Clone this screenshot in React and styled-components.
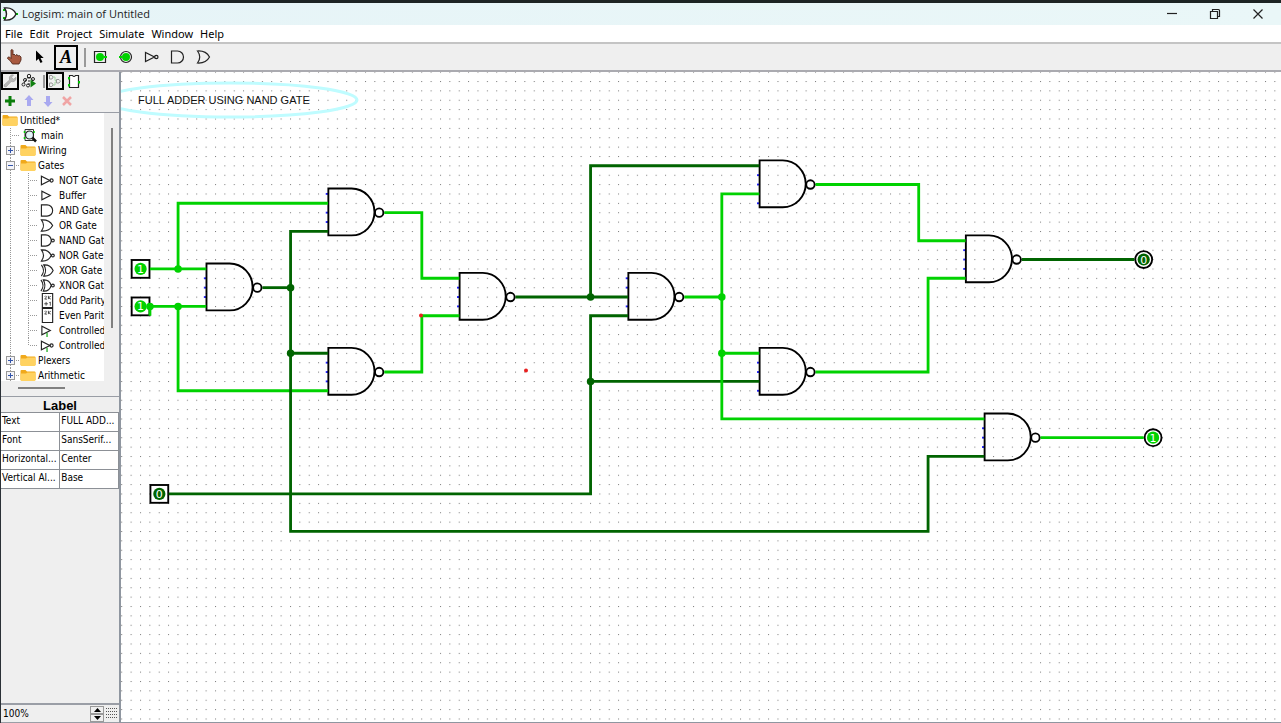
import React from "react";
import styled, { createGlobalStyle } from "styled-components";

const GlobalStyle = createGlobalStyle`
  *, *::before, *::after { box-sizing: border-box; }
  body { margin: 0; background: #efefef; }
  button, input { font: inherit; color: inherit; margin: 0; padding: 0; border: 0; border-radius: 0; background: none; }
  svg { display: block; flex: none; }
`;

const uiFont = `"DejaVu Sans Condensed", "DejaVu Sans", sans-serif`;

const Window = styled.div`
  display: flex;
  flex-direction: column;
  height: 100vh;
  border-top: 3px solid #1d2424;
  border-left: 1px solid #2a3036;
  background: #efefef;
  color: #000;
  font: 10px/15px ${uiFont};
  overflow: hidden;
`;

const TitleBar = styled.header`
  display: flex;
  align-items: center;
  flex: none;
  height: 22px;
  padding: 0 2px 0 1px;
  gap: 4px;
  background: linear-gradient(90deg, #e6f4f7, #eaf7f8);
`;

const Title = styled.h1`
  flex: 1;
  margin: 0;
  font: 400 11px/20px "Open Sans", sans-serif;
  color: #222;
`;

const WindowControls = styled.div`
  display: flex;
`;

const WindowButton = styled.button`
  display: flex;
  align-items: center;
  justify-content: center;
  width: 43px;
  height: 20px;
`;

const MenuBar = styled.nav`
  display: flex;
  flex: none;
  gap: 7px;
  height: 19px;
  padding: 0 4px;
  background: #fff;
  border-bottom: 2px solid #c4c4c4;
  font: 11px/17px "Noto Sans", sans-serif;
`;

const MenuItem = styled.button`
  line-height: 17px;
`;

const Toolbar = styled.div`
  display: flex;
  align-items: center;
  flex: none;
  gap: 2px;
  height: 28px;
  padding: 0 1px;
  border-bottom: 2px solid #aaaab0;
`;

const ToolButton = styled.button`
  display: flex;
  align-items: center;
  justify-content: center;
  width: ${(p) => (p.$small ? 18 : 24)}px;
  height: ${(p) => (p.$small ? 18 : 25)}px;
  border: ${(p) => (p.$on ? "2px solid #000" : "0")};
`;

const Separator = styled.span`
  width: 2px;
  height: ${(p) => (p.$small ? 13 : 19)}px;
  margin: ${(p) => (p.$small ? "0 0 0 4px" : "0 0 0 4px")};
  background: #999;
`;

const Body = styled.div`
  display: flex;
  flex: 1;
  min-height: 0;
`;

const Sidebar = styled.aside`
  display: flex;
  flex-direction: column;
  flex: none;
  width: 120px;
  border-right: 2px solid #8f96a0;
`;

const SideTools = styled.div`
  display: flex;
  align-items: center;
  flex: none;
  gap: 1px;
  height: ${(p) => (p.$tall ? 22 : 18)}px;
`;

const Explorer = styled.div`
  display: grid;
  grid-template: 268px 15px / 103px 1fr;
  flex: none;
  border-top: 1px solid #999da5;
  border-bottom: 1px solid #999da5;
`;

const Tree = styled.ul`
  margin: 0;
  padding: 0;
  list-style: none;
  background: #fff;
  overflow: hidden;
`;

const TreeRow = styled.li`
  display: flex;
  align-items: center;
  height: 15px;
  white-space: nowrap;
  padding-left: 1px;
`;

const Guide = styled.span`
  display: flex;
  align-items: center;
  flex: none;
  width: 18px;
  height: 15px;
  padding-left: 4px;
  background-image: repeating-linear-gradient(to bottom, #999 0 1px, #fff 1px 2px),
    repeating-linear-gradient(to right, #999 0 1px, #fff 1px 2px);
  background-size: 1px ${(p) => (p.$last ? "8px" : "100%")}, ${(p) => (p.$branch ? 11 : 0)}px 1px;
  background-position: 8px 0, 8px 7px;
  background-repeat: no-repeat;
`;

const Expander = styled.button`
  display: flex;
  align-items: center;
  justify-content: center;
  width: 9px;
  height: 9px;
  border: 1px solid #999;
  background: #f4f4f8;
`;

const TreeIcon = styled.span`
  display: flex;
  flex: none;
  width: ${(p) => (p.$leaf ? 21 : 18)}px;
  padding-left: ${(p) => (p.$leaf ? 2 : 0)}px;
`;

const VerticalTrack = styled.div`
  padding: 15px 0 0 7px;
`;

const HorizontalTrack = styled.div`
  padding: 6px 0 0 17px;
`;

const Thumb = styled.div`
  width: ${(p) => (p.$vertical ? 2 : 47)}px;
  height: ${(p) => (p.$vertical ? 200 : 2)}px;
  background: #808080;
`;

const Attributes = styled.table`
  flex: none;
  width: 100%;
  table-layout: fixed;
  border-collapse: collapse;
  background: #fff;

  caption {
    height: 15px;
    font: 700 13px/17px "Liberation Sans", sans-serif;
    background: #efefef;
  }
  th, td {
    height: 19px;
    padding: 0 0 0 1px;
    border: 1px solid #8c9096;
    border-left-width: 0;
    font-weight: 400;
    line-height: 15px;
    vertical-align: top;
    text-align: left;
    white-space: nowrap;
  }
`;

const ZoomBar = styled.div`
  display: flex;
  align-items: center;
  flex: none;
  height: 20px;
  margin-top: auto;
  border-top: 2px solid #9a9ea6;
  border-bottom: 1px solid #9a9ea6;
`;

const ZoomInput = styled.input`
  flex: 1;
  min-width: 0;
  height: 17px;
  padding-left: 2px;
`;

const Stepper = styled.div`
  display: flex;
  flex-direction: column;
  width: 14px;
`;

const StepButton = styled.button`
  display: flex;
  align-items: center;
  justify-content: center;
  height: 8px;
  border: 1px solid #999;
`;

const GridToggle = styled.button`
  display: flex;
  align-items: center;
  justify-content: center;
  width: 15px;
  height: 17px;
`;

const Canvas = styled.main`
  flex: 1;
  min-width: 0;
  background: #fff;
  border-bottom: 1px solid #8f96a0;
  overflow: hidden;

  svg { width: 100%; height: 100%; }
`;

/* ---------- icons ---------- */

const gateShapes = {
  not: <><path d="M1.500 3.500V12.500L10.500 8z" /><circle cx="12.300" cy="8" r="1.700" /></>,
  buffer: <path d="M2 3.500V12.500L11 8z" />,
  and: <path d="M1.500 2H7.500a6 6 0 0 1 0 12H1.500z" />,
  or: <path d="M1.500 2Q10 1.500 13.500 8Q10 14.500 1.500 14Q6 8 1.500 2z" />,
  nand: <><path d="M1.500 2H6a6 6 0 0 1 0 12H1.500z" /><circle cx="13.700" cy="8" r="1.500" /></>,
  nor: <><path d="M1.500 2Q9 1.500 12 8Q9 14.500 1.500 14Q6 8 1.500 2z" /><circle cx="13.700" cy="8" r="1.500" /></>,
  xor: <><path d="M4 2Q11 1.500 14 8Q11 14.500 4 14Q8 8 4 2z" /><path d="M1.500 2Q6 8 1.500 14" /></>,
  xnor: <><path d="M3.500 2Q10 1.500 12 8Q10 14.500 3.500 14Q7 8 3.500 2z" /><path d="M1 2Q5.500 8 1 14" /><circle cx="13.700" cy="8" r="1.500" /></>,
  controlled: <><path d="M2 3.500V12.500L11 8z" /><path d="M7.500 10.500V15" stroke="#00a000" /></>,
  controlledNot: <><path d="M1.500 3.500V12.500L10.500 8z" /><circle cx="12.300" cy="8" r="1.700" /><path d="M7.500 10.500V15" stroke="#00a000" /></>,
  odd: <><path d="M2.500 .5H13.500V15.500H2.500z" /><path d="M5 4Q6 2 7 4L5 6.500H7.500M9 3V6.500M11.500 3.500L9 5L11.500 6.500M4.500 11.500H8.500M6.500 9.500V13.500M10 10.500L11 9.500V13.500" strokeWidth=".8" /></>,
  even: <><path d="M2.500 .5H13.500V15.500H2.500z" /><path d="M5 4Q6 2 7 4L5 6.500H7.500M9 3V6.500M11.500 3.500L9 5L11.500 6.500" strokeWidth=".8" /></>,
};

const GateIcon = ({ kind, size = 16 }) => (
  <svg width={size} height={size} viewBox="0 0 16 16" fill="none" stroke="#222" strokeWidth="1.200">
    {gateShapes[kind]}
  </svg>
);

const FolderIcon = () => (
  <svg width="16" height="13" viewBox="0 0 16 13">
    <path d="M.5 2Q.5 1 1.500 1H5.500L7 2.500H14.500Q15.500 2.500 15.500 3.500V11H.5z" fill="#f0a91b" />
    <path d="M.5 4.500H6L7.500 3.500H15.500V11Q15.500 12 14.500 12H1.500Q.5 12 .5 11z" fill="#ffd261" />
  </svg>
);

const MainIcon = () => (
  <svg width="16" height="15" viewBox="0 0 16 15" fill="none">
    <path d="M3 1.500H11.500V12.500H3z" stroke="#333" />
    <path d="M2.500 3V5M2.500 9V11M12 3V5" stroke="#00d000" strokeWidth="1.500" />
    <circle cx="7.500" cy="7" r="4" fill="#e4f4f8" stroke="#222" strokeWidth="1.200" />
    <path d="M10.500 10L14 13.500" stroke="#111" strokeWidth="2.500" />
  </svg>
);

const AppIcon = () => (
  <svg width="16" height="14" viewBox="0 0 16 14" fill="none">
    <path d="M1 3H4M1 11H4M13 7H16" stroke="#00c000" strokeWidth="2" />
    <path d="M2.500 1Q11 0 14 7Q11 14 2.500 13Q6.500 7 2.500 1z" fill="#fff" stroke="#222" strokeWidth="1.400" />
  </svg>
);

const HandIcon = () => (
  <svg width="16" height="16" viewBox="0 0 16 16">
    <path d="M5 1Q6.500 0 7 1.500V6L8 5L9.500 6.500L11 5.500L12 7L13.500 6.500L15 8V11L13 15H6.500L4 11.500L1.500 9.500Q1.500 7.500 3.500 8L5 9.500z" fill="#a9593f" stroke="#572a1d" strokeWidth=".9" />
  </svg>
);

const ArrowIcon = () => (
  <svg width="12" height="16" viewBox="0 0 12 16">
    <path d="M2 1.500L2 12L4.500 9.700L6.500 14L8.500 13L6.500 9L9.700 9z" />
  </svg>
);

const LetterIcon = styled.span`
  font: italic 700 18px/18px "Liberation Serif", serif;
`;

const PinIcon = ({ round }) => (
  <svg width="14" height="14" viewBox="0 0 14 14" fill="none">
    {round ? <circle cx="7" cy="7" r="5.500" stroke="#222" strokeWidth="1.200" /> : <path d="M1.500 1.500H12.500V12.500H1.500z" stroke="#222" strokeWidth="1.200" />}
    <circle cx="7" cy="7" r="4" fill="#00d200" />
    <path d={round ? "M0 7H3" : "M11 7H14"} stroke="#00d200" strokeWidth="2" />
  </svg>
);

const WrenchIcon = () => (
  <svg width="14" height="14" viewBox="0 0 14 14">
    <path d="M1 11L6.500 6Q5.500 2.500 8 1.200Q9.500 .5 10.500 1L8.500 3.300L10.500 5.300L13 3.300Q13.500 6.500 11 7.500Q9.500 8 8.200 7.500L3 13Q.5 13 1 11z" fill="#b8b8b8" stroke="#999" strokeWidth=".6" />
  </svg>
);

const SimulationIcon = () => (
  <svg width="16" height="16" viewBox="0 0 16 16" fill="none" stroke="#222">
    <path d="M7 4L3 10M8 4L8 12M9 4L12 8" strokeDasharray="2 1" />
    <circle cx="8" cy="3" r="1.700" /><circle cx="4" cy="7" r="1.500" />
    <circle cx="2.500" cy="11.500" r="1.500" /><circle cx="7" cy="12.500" r="1.500" /><circle cx="12" cy="6" r="1.500" />
    <path d="M9.500 6.500L15 10.500L9.500 14.500z" fill="#108010" stroke="none" />
  </svg>
);

const LayoutIcon = () => (
  <svg width="14" height="14" viewBox="0 0 14 14" fill="none" stroke="#999">
    <path d="M1.500 1.500H4q2 1.500 0 3.500H1.500zM1.500 9H4q2 1.500 0 3.500H1.500zM8.500 5.500H11q3 1.500 0 3.500H8.500z" />
    <path d="M5 3H7V6.500H8M5 11H7V8H8" stroke="#a5d6a5" />
  </svg>
);

const AppearanceIcon = () => (
  <svg width="12" height="15" viewBox="0 0 12 15" fill="none">
    <path d="M1.500 1.500H4.500q1.500 2 3 0H10.500V13.500H1.500z" fill="#fff" stroke="#222" strokeWidth="1.200" />
    <path d="M1 3V5.500M1 10V12.500M11 7V9.500" stroke="#00c800" strokeWidth="2" />
  </svg>
);

const editShapes = {
  add: <path d="M6 1V11M1 6H11" stroke="#0a7d0a" strokeWidth="3" />,
  up: <path d="M6 0L10.500 5H8V11H4V5H1.500z" fill="#a9a9f0" />,
  down: <path d="M6 12L10.500 7H8V1H4V7H1.500z" fill="#a9a9f0" />,
  remove: <path d="M2 2L10 10M10 2L2 10" stroke="#f0a5a5" strokeWidth="2.500" />,
};

const EditIcon = ({ kind }) => (
  <svg width="12" height="12" viewBox="0 0 12 12" fill="none">{editShapes[kind]}</svg>
);

const windowShapes = {
  Minimize: <path d="M1 5.500H11" />,
  Restore: <path d="M1.500 3.500H8.500V10.500H1.500zM3.500 3V1.500H9.500Q10.500 1.500 10.500 2.500V8.500H9" />,
  Close: <path d="M1.500 1.500L10.500 10.500M10.500 1.500L1.500 10.500" />,
};

/* ---------- circuit ---------- */

const HIGH = "#00d200";
const LOW = "#006400";

// All circuit coordinates are grid steps of ten units.
const wires = [
  [HIGH, [2, 20], [8, 20]],
  [HIGH, [5, 20], [5, 13], [21, 13]],
  [HIGH, [2, 25], [2, 24], [8, 24]],
  [HIGH, [5, 24], [5, 33], [21, 33]],
  [HIGH, [27, 14], [31, 14], [31, 21], [35, 21]],
  [HIGH, [27, 31], [31, 31], [31, 25], [35, 25]],
  [LOW, [14, 22], [17, 22]],
  [LOW, [21, 16], [17, 16], [17, 48], [85, 48], [85, 40], [91, 40]],
  [LOW, [17, 29], [21, 29]],
  [LOW, [41, 23], [53, 23]],
  [LOW, [49, 23], [49, 9], [67, 9]],
  [LOW, [53, 25], [49, 25], [49, 44], [4, 44]],
  [LOW, [49, 32], [67, 32]],
  [LOW, [95, 19], [107, 19]],
  [HIGH, [59, 23], [63, 23]],
  [HIGH, [67, 12], [63, 12], [63, 36], [91, 36]],
  [HIGH, [63, 29], [67, 29]],
  [HIGH, [73, 11], [84, 11], [84, 17], [89, 17]],
  [HIGH, [73, 31], [85, 31], [85, 21], [89, 21]],
  [HIGH, [97, 38], [108, 38]],
];

const junctions = [
  [HIGH, 5, 20], [HIGH, 5, 24], [HIGH, 2, 24], [LOW, 17, 22], [LOW, 17, 29],
  [LOW, 49, 23], [LOW, 49, 32], [HIGH, 63, 23], [HIGH, 63, 29],
];

// Left edge, centre row, rows of the unconnected inputs.
const gates = [
  [8, 22, [-1, 0, 1]],
  [21, 14, [-2, 0, 1]],
  [21, 31, [-1, 0, 1]],
  [35, 23, [-1, 0, 1]],
  [53, 23, [-2, -1, 1]],
  [67, 11, [-1, 0, 2]],
  [67, 31, [-1, 0, 2]],
  [89, 19, [-1, 0, 1]],
  [91, 38, [-1, 0, 1]],
];

const pins = [
  [1, 20, 1, false], [1, 24, 1, false], [3, 44, 0, false],
  [108, 19, 0, true], [109, 38, 1, true],
];

const Circuit = () => (
  <svg role="img" aria-label="Full adder circuit">
    <defs>
      <pattern id="grid" x="9.600" y="9" width="9.375" height="9.375" patternUnits="userSpaceOnUse">
        <rect width="1" height="1" fill="#777" />
      </pattern>
    </defs>
    <rect width="100%" height="100%" fill="url(#grid)" />
    <ellipse cx="109" cy="28" rx="127" ry="17" fill="none" stroke="#bffcff" strokeWidth="3" />
    <text x="17" y="32" fontFamily="Liberation Sans, sans-serif" fontSize="11" fill="#111">FULL ADDER USING NAND GATE</text>
    <g transform="translate(10.200 9.400) scale(.9375)" fill="none">
      {pins.map(([x, y, value, output]) => (
        <g key={`${x}-${y}`} stroke="#000" strokeWidth="2">
          {output
            ? <circle cx={x * 10} cy={y * 10} r="9" fill="#fff" />
            : <rect x={x * 10 - 9.500} y={y * 10 - 9.500} width="19" height="19" fill="#fff" />}
          <circle cx={x * 10} cy={y * 10} r="6.500" fill={value ? HIGH : LOW} stroke="none" />
        </g>
      ))}
      {gates.map(([x, y, open]) => (
        <g key={`${x}-${y}`} transform={`translate(${x * 10} ${y * 10})`}>
          {open.map((row) => <path key={row} d={`M-2.500 ${row * 10}H0`} stroke="#2020ff" strokeWidth="2" />)}
          <path d="M.3-25.700H25A24.500 25 0 0 1 25 24.300H.3z" stroke="#000" strokeWidth="2" />
          <circle cx="54.500" cy="0" r="4.500" stroke="#000" strokeWidth="2" />
        </g>
      ))}
      {wires.map(([color, ...points]) => (
        <polyline key={points.join(" ")} points={points.map(([x, y]) => `${x * 10},${y * 10}`).join(" ")} stroke={color} strokeWidth="3" />
      ))}
      {junctions.map(([color, x, y]) => <circle key={`${x}-${y}`} cx={x * 10} cy={y * 10} r="4" fill={color} />)}
    </g>
    {pins.map(([x, y, value]) => (
      <text key={`${x}-${y}`} x={10.2 + x * 9.375} y={13.4 + y * 9.375} textAnchor="middle" fontFamily="DejaVu Sans, sans-serif" fontSize="11" fill="#fff">{value}</text>
    ))}
    <circle cx="300" cy="243.500" r="2" fill="#e82020" />
    <circle cx="405" cy="298.500" r="2" fill="#e82020" />
  </svg>
);

/* ---------- data ---------- */

const gateItems = [
  ["not", "NOT Gate"], ["buffer", "Buffer"], ["and", "AND Gate"], ["or", "OR Gate"],
  ["nand", "NAND Gate"], ["nor", "NOR Gate"], ["xor", "XOR Gate"], ["xnor", "XNOR Gate"],
  ["odd", "Odd Parity"], ["even", "Even Parity"], ["controlled", "Controlled"],
  ["controlledNot", "Controlled"],
];

const attributes = [
  ["Text", "FULL ADD..."],
  ["Font", "SansSerif..."],
  ["Horizontal...", "Center"],
  ["Vertical Al...", "Base"],
];

const FolderRow = ({ label, open }) => (
  <TreeRow>
    <Guide $branch>
      <Expander aria-label={`${open ? "Collapse" : "Expand"} ${label}`}>
        <svg width="7" height="7" viewBox="0 0 7 7" stroke="#3355aa">
          <path d={open ? "M1 3.500H6" : "M1 3.500H6M3.500 1V6"} />
        </svg>
      </Expander>
    </Guide>
    <TreeIcon><FolderIcon /></TreeIcon>
    {label}
  </TreeRow>
);

export default function App() {
  return (
    <>
      <GlobalStyle />
      <Window>
        <TitleBar>
          <AppIcon />
          <Title>Logisim: main of Untitled</Title>
          <WindowControls>
            {Object.entries(windowShapes).map(([name, shape]) => (
              <WindowButton key={name} aria-label={name}>
                <svg width="12" height="12" viewBox="0 0 12 12" fill="none" stroke="#222" strokeWidth="1.200">{shape}</svg>
              </WindowButton>
            ))}
          </WindowControls>
        </TitleBar>
        <MenuBar>
          {["File", "Edit", "Project", "Simulate", "Window", "Help"].map((name) => <MenuItem key={name}>{name}</MenuItem>)}
        </MenuBar>
        <Toolbar>
          <ToolButton aria-label="Poke"><HandIcon /></ToolButton>
          <ToolButton aria-label="Select"><ArrowIcon /></ToolButton>
          <ToolButton aria-label="Text tool" $on><LetterIcon>A</LetterIcon></ToolButton>
          <Separator />
          <ToolButton aria-label="Input pin"><PinIcon /></ToolButton>
          <ToolButton aria-label="Output pin"><PinIcon round /></ToolButton>
          <ToolButton aria-label="NOT gate"><GateIcon kind="not" /></ToolButton>
          <ToolButton aria-label="AND gate"><GateIcon kind="and" /></ToolButton>
          <ToolButton aria-label="OR gate"><GateIcon kind="or" /></ToolButton>
        </Toolbar>
        <Body>
          <Sidebar>
            <SideTools>
              <ToolButton $small $on aria-label="Toolbox"><WrenchIcon /></ToolButton>
              <ToolButton $small aria-label="Simulation tree"><SimulationIcon /></ToolButton>
              <Separator $small />
              <ToolButton $small $on aria-label="Edit layout"><LayoutIcon /></ToolButton>
              <ToolButton $small aria-label="Edit appearance"><AppearanceIcon /></ToolButton>
            </SideTools>
            <SideTools $tall>
              {["add", "up", "down", "remove"].map((kind) => (
                <ToolButton key={kind} $small aria-label={kind}><EditIcon kind={kind} /></ToolButton>
              ))}
            </SideTools>
            <Explorer>
              <Tree>
                <TreeRow><TreeIcon><FolderIcon /></TreeIcon>Untitled*</TreeRow>
                <TreeRow>
                  <Guide $branch />
                  <TreeIcon $leaf><MainIcon /></TreeIcon>
                  main
                </TreeRow>
                <FolderRow label="Wiring" />
                <FolderRow label="Gates" open />
                {gateItems.map(([kind, label], index) => (
                  <TreeRow key={kind}>
                    <Guide />
                    <Guide $branch $last={index === gateItems.length - 1} />
                    <TreeIcon $leaf><GateIcon kind={kind} size={15} /></TreeIcon>
                    {label}
                  </TreeRow>
                ))}
                <FolderRow label="Plexers" />
                <FolderRow label="Arithmetic" />
              </Tree>
              <VerticalTrack><Thumb $vertical /></VerticalTrack>
              <HorizontalTrack><Thumb /></HorizontalTrack>
            </Explorer>
            <Attributes>
              <caption>Label</caption>
              <tbody>
                {attributes.map(([name, value]) => (
                  <tr key={name}><th scope="row">{name}</th><td>{value}</td></tr>
                ))}
              </tbody>
            </Attributes>
            <ZoomBar>
              <ZoomInput aria-label="Zoom" defaultValue="100%" />
              <Stepper>
                <StepButton aria-label="Zoom in"><svg width="7" height="4" viewBox="0 0 7 4"><path d="M0 4L3.500 0L7 4z" /></svg></StepButton>
                <StepButton aria-label="Zoom out"><svg width="7" height="4" viewBox="0 0 7 4"><path d="M0 0L3.500 4L7 0z" /></svg></StepButton>
              </Stepper>
              <GridToggle aria-label="Show grid">
                <svg width="11" height="11" viewBox="0 0 11 11" stroke="#555" strokeDasharray="1 1">
                  <path d="M0 .5H11M0 3.500H11M0 6.500H11M0 9.500H11" />
                </svg>
              </GridToggle>
            </ZoomBar>
          </Sidebar>
          <Canvas><Circuit /></Canvas>
        </Body>
      </Window>
    </>
  );
}
